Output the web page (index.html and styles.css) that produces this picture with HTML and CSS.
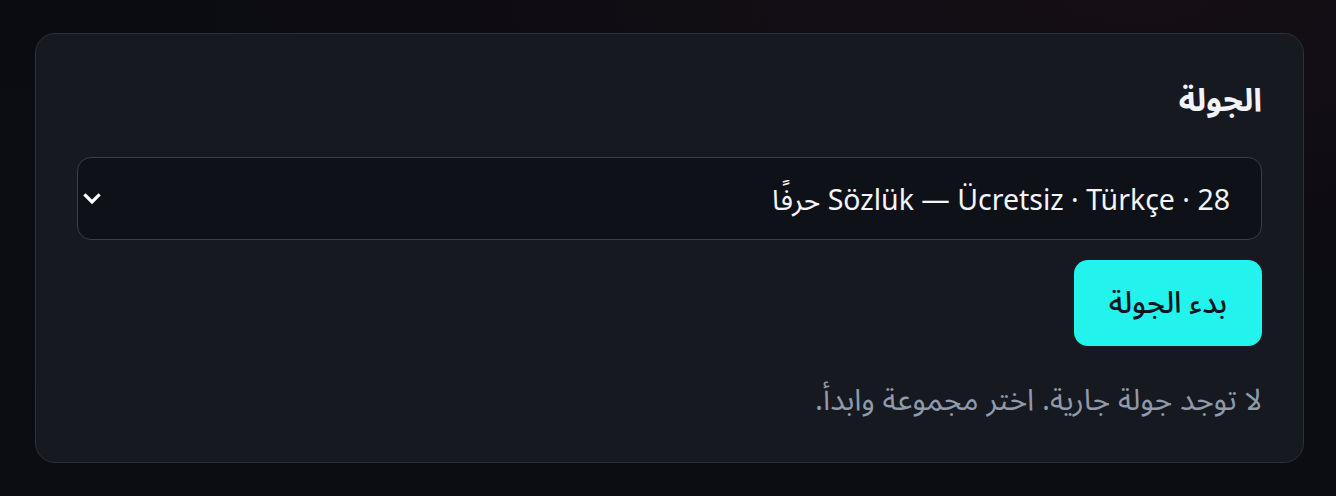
FILE: index.html
```html
<!DOCTYPE html>
<html lang="ar" dir="rtl">
<head>
<meta charset="utf-8">
<title>الجولة</title>
<link rel="stylesheet" href="styles.css">
</head>
<body>
<main class="page">
  <section class="card">
    <h2 class="title">الجولة</h2>
    <div class="select-wrap">
      <select class="select">
        <option>Sözlük — Ücretsiz · Türkçe · 28 حرفًا</option>
      </select>
      <svg class="chev" width="18" height="12" viewBox="0 0 18 12" aria-hidden="true">
        <path d="M2.5 2.5 L9 9 L15.5 2.5" fill="none" stroke="#ffffff" stroke-width="3.2" stroke-linecap="square"/>
      </svg>
    </div>
    <div class="actions">
      <button class="btn">بدء الجولة</button>
    </div>
    <p class="status">لا توجد جولة جارية. اختر مجموعة وابدأ.</p>
  </section>
</main>
</body>
</html>
```
FILE: styles.css
```css
html, body {
  margin: 0;
  height: 100%;
}
body {
  background:
    radial-gradient(ellipse 70% 60% at 85% 0%, #150e15 0%, rgba(21,14,21,0) 100%),
    linear-gradient(180deg, #0b0c11 0%, #0c0c13 100%);
  font-family: "Noto Sans", "Noto Sans Arabic", "DejaVu Sans", sans-serif;
  color: #eef1f5;
}
.page {
  padding: 33px 32px 33px 35px;
}
.card {
  background: #161920;
  border: 1px solid #2a303c;
  border-radius: 20px;
  padding: 41px 41px 43px;
  display: flex;
  flex-direction: column;
}
.title {
  margin: 0 0 34px;
  font-size: 32px;
  font-weight: 700;
  line-height: 48px;
  color: #f1f3f6;
}
.select-wrap {
  position: relative;
}
.select {
  appearance: none;
  -webkit-appearance: none;
  width: 100%;
  height: 83px;
  box-sizing: border-box;
  background: #0e1118;
  border: 1px solid #373e4c;
  border-radius: 14px;
  color: #f3f5f8;
  font-family: inherit;
  font-size: 28.5px;
  padding: 0 31px 0 40px;
  direction: rtl;
  outline: none;
}
.chev {
  position: absolute;
  left: 6px;
  top: 36px;
  pointer-events: none;
}
.actions {
  display: flex;
  margin-top: 20px;
}
.btn {
  background: #22f3ed;
  color: #0a161c;
  border: 0;
  border-radius: 14px;
  height: 86px;
  padding: 0 35px;
  font-family: inherit;
  font-size: 30px;
  font-weight: 500;
}
.status {
  margin: 33px 0 0;
  font-size: 30px;
  line-height: 40px;
  color: #8f9aab;
}
```
